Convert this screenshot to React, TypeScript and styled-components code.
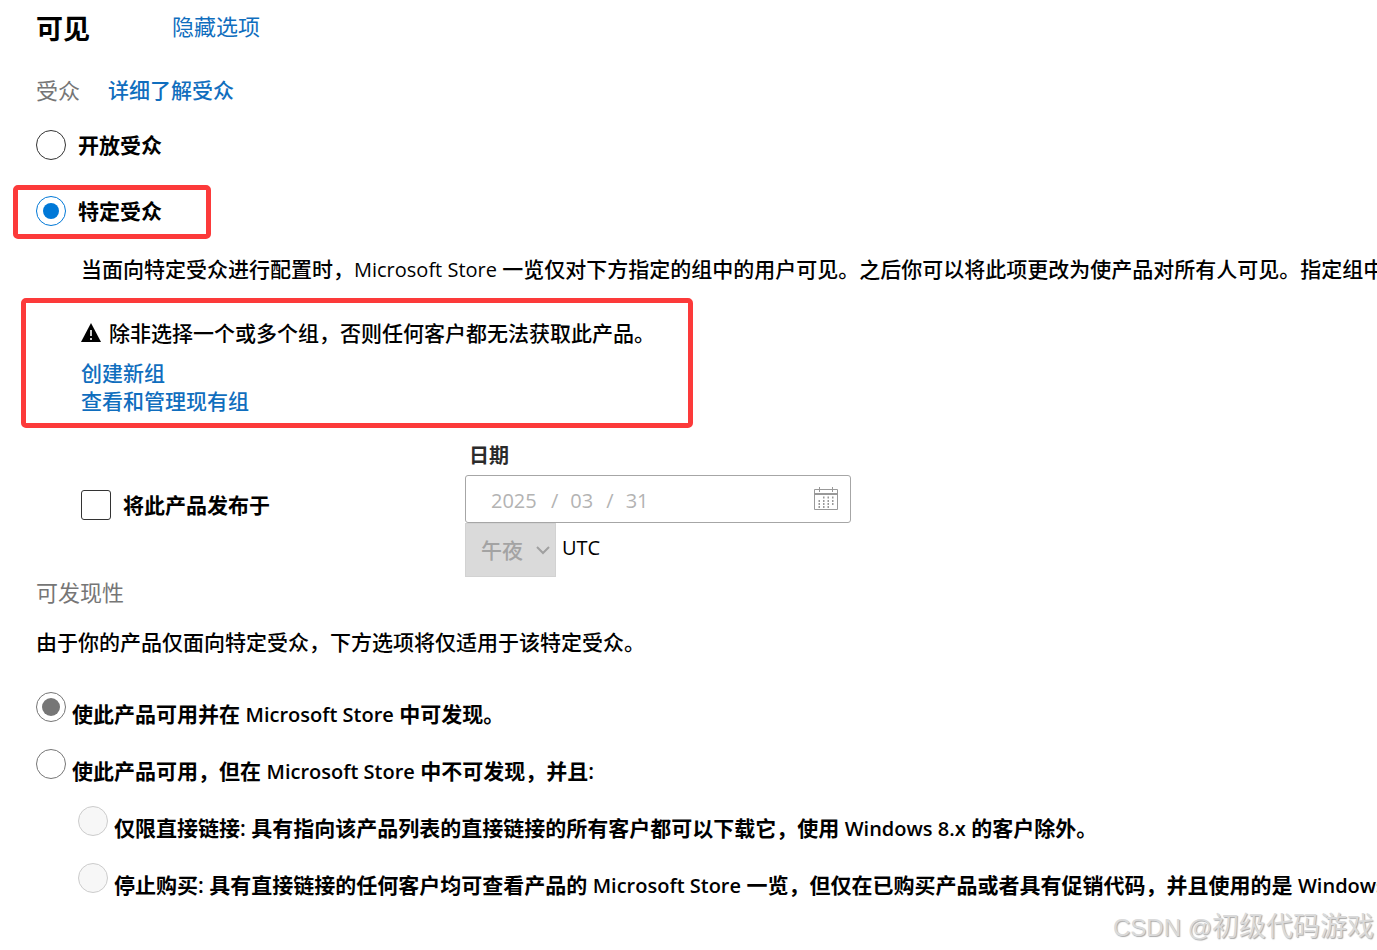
import React, { useState } from "react";
import styled, { createGlobalStyle } from "styled-components";

const GlobalStyle = createGlobalStyle`
  *, *::before, *::after { box-sizing: border-box; }
  body {
    margin: 0;
    background: #fff;
    color: #000;
    font-family: "Open Sans", "Noto Sans CJK SC", sans-serif;
    font-size: 21px;
    font-weight: 500;
    line-height: 28px;
  }
  h1, h2, p, fieldset { margin: 0; padding: 0; border: 0; min-width: 0; }
  input, select { font: inherit; margin: 0; }
`;

const Page = styled.main`
  overflow: hidden;
  white-space: nowrap;
`;

const Header = styled.header`
  display: flex;
  align-items: flex-start;
  gap: 82px;
  height: 56px;
  padding: 12px 0 0 36px;
`;

const Title = styled.h1`
  font-size: 27px;
  font-weight: 700;
  line-height: 34px;
`;

const Link = styled.a<{ $large?: boolean }>`
  color: #106ebe;
  font-size: ${(p) => (p.$large ? 22 : 21)}px;
  font-weight: ${(p) => (p.$large ? 400 : 500)};
  text-decoration: none;
`;

const SectionTitle = styled.h2`
  color: #767676;
  font-size: 22px;
  font-weight: 400;
`;

const AudienceHeading = styled.div`
  display: flex;
  align-items: center;
  gap: 28px;
  height: 68px;
  padding: 0 0 1px 36px;
`;

const Latin = styled.span<{ $strong?: boolean }>`
  font-size: 20px;
  font-weight: ${(p) => (p.$strong ? 600 : 400)};
  line-height: 20px;
`;

const Choice = styled.label<{ $inset?: boolean }>`
  display: flex;
  align-items: center;
  gap: 12px;
  padding: ${(p) => (p.$inset ? "0" : "6px 0 6px 36px")};
  font-weight: 600;
`;

const Radio = styled.input<{ $tone: string; $dot?: number }>`
  appearance: none;
  flex: none;
  display: grid;
  place-items: center;
  width: 30px;
  height: 30px;
  border: 1px solid ${(p) => p.$tone};
  border-radius: 50%;
  background: #fff;

  &:checked::before {
    content: "";
    width: ${(p) => p.$dot ?? 16}px;
    height: ${(p) => p.$dot ?? 16}px;
    border-radius: 50%;
    background: ${(p) => p.$tone};
  }
  &:disabled {
    border-color: #ccc;
    background: #f7f7f7;
  }
`;

const Highlight = styled.div`
  width: fit-content;
  border: 5px solid #fc3a3a;
  border-radius: 5px;
`;

const ChoiceHighlight = styled(Highlight)`
  margin: 19px 0 0 13px;
  padding: 6px 44px 8px 18px;
`;

const WarningHighlight = styled(Highlight)`
  margin: 15px 0 0 21px;
  padding: 16px 33px 8px 55px;
`;

const Explanation = styled.p`
  padding: 16px 0 0 81px;
`;

const Warning = styled.p`
  display: flex;
  align-items: center;
  gap: 8px;
  margin-bottom: 12px;
`;

const LinkList = styled.nav`
  display: flex;
  flex-direction: column;
  align-items: flex-start;
`;

const Schedule = styled.section`
  display: grid;
  grid-template-columns: 384px auto;
  justify-content: start;
  align-items: center;
  padding: 13px 0 0 81px;
`;

const PublishOption = styled.label`
  display: flex;
  align-items: center;
  gap: 12px;
  padding-bottom: 8px;
  font-weight: 600;
`;

const Checkbox = styled.input`
  appearance: none;
  width: 30px;
  height: 30px;
  border: 1px solid #333;
  border-radius: 3px;
  background: #fff;
`;

const DateLabel = styled.label`
  display: block;
  padding: 1px 0 5px 4px;
  color: #2b2b2b;
  font-weight: 600;
  font-size: 20px;
`;

const DateBox = styled.div`
  display: flex;
  align-items: center;
  gap: 12px;
  width: 386px;
  height: 48px;
  padding: 3px 12px 0 25px;
  border: 1px solid #a6a6a6;
  border-radius: 3px;
  color: #b3b3b3;
  font-size: 20px;
  font-weight: 400;
`;

const DatePart = styled.input<{ $digits: number }>`
  width: ${(p) => p.$digits * 12}px;
  padding: 0;
  border: 0;
  background: none;
  color: inherit;
`;

const CalendarIcon = styled.svg`
  flex: none;
  margin: 0 0 4px auto;
`;

const TimeRow = styled.div`
  display: flex;
  align-items: flex-start;
  gap: 6px;
`;

const TimeZone = styled(Latin)`
  padding-top: 15px;
`;

const SelectBox = styled.div`
  position: relative;
  width: 91px;
  height: 54px;
`;

const Select = styled.select`
  appearance: none;
  width: 100%;
  height: 100%;
  padding: 0 0 0 15px;
  border: 1px solid #d2d2d2;
  border-radius: 0;
  background: #dadada;
  color: #a3a3a3;
  opacity: 1;
`;

const Chevron = styled.svg`
  position: absolute;
  top: 23px;
  right: 6px;
  pointer-events: none;
`;

const Discoverability = styled.section`
  padding: 1px 0 0 36px;
`;

const Note = styled.p`
  margin: 22px 0 36px;
`;

const OptionList = styled.fieldset`
  display: flex;
  flex-direction: column;
  gap: 21px;
`;

const Option = styled.label<{ $nested?: boolean }>`
  display: flex;
  align-items: flex-start;
  gap: 6px;
  padding-left: ${(p) => (p.$nested ? 42 : 0)}px;
  font-weight: 600;
`;

const OptionText = styled.span`
  padding-top: 8px;
`;

const Watermark = styled.footer`
  padding: 10px 3px 4px 0;
  color: #dadada;
  font-family: "Liberation Sans", "Noto Sans CJK SC", sans-serif;
  font-size: 27px;
  font-weight: 400;
  line-height: 36px;
  text-align: right;
  text-shadow: 1px 1px 1px #aaa;
`;

const WatermarkSite = styled.span`
  font-size: 24px;
  line-height: 24px;
`;

export default function App() {
  const [audience, setAudience] = useState("private");
  const [discovery, setDiscovery] = useState("store");

  return (
    <Page>
      <GlobalStyle />
      <Header>
        <Title>可见</Title>
        <Link href="#options" $large>隐藏选项</Link>
      </Header>

      <section>
        <AudienceHeading>
          <SectionTitle>受众</SectionTitle>
          <Link href="#audience">详细了解受众</Link>
        </AudienceHeading>
        <Choice>
          <Radio
            type="radio"
            name="audience"
            $tone="#333"
            checked={audience === "public"}
            onChange={() => setAudience("public")}
          />
          开放受众
        </Choice>
        <ChoiceHighlight>
          <Choice $inset>
            <Radio
              type="radio"
              name="audience"
              $tone="#0078d7"
              checked={audience === "private"}
              onChange={() => setAudience("private")}
            />
            特定受众
          </Choice>
        </ChoiceHighlight>
        <Explanation>
          当面向特定受众进行配置时，<Latin>Microsoft Store </Latin>
          一览仅对下方指定的组中的用户可见。之后你可以将此项更改为使产品对所有人可见。指定组中
        </Explanation>
        <WarningHighlight>
          <Warning>
            <svg width="20" height="20" viewBox="0 0 20 20" aria-hidden="true">
              <path d="M10 0 20 19H0Z" fill="#000" />
              <path d="M9.2 7h1.6v6H9.200zM9.200 15h1.600v2H9.200z" fill="#fff" />
            </svg>
            除非选择一个或多个组，否则任何客户都无法获取此产品。
          </Warning>
          <LinkList>
            <Link href="#new-group">创建新组</Link>
            <Link href="#groups">查看和管理现有组</Link>
          </LinkList>
        </WarningHighlight>
      </section>

      <Schedule>
        <PublishOption>
          <Checkbox type="checkbox" />
          将此产品发布于
        </PublishOption>
        <div>
          <DateLabel htmlFor="year">日期</DateLabel>
          <DateBox>
            <DatePart id="year" $digits={4} defaultValue="2025" disabled />
            <span>/</span>
            <DatePart $digits={2} aria-label="月" defaultValue="03" disabled />
            <span>/</span>
            <DatePart $digits={2} aria-label="日" defaultValue="31" disabled />
            <CalendarIcon width="24" height="24" viewBox="0 0 24 24" aria-hidden="true">
              <path d="M.5 2.500h23v20H.5zM5.500 0v5M18.500 0v5" fill="none" stroke="#999" />
              <path d="M1 7h22" stroke="#999" strokeWidth="2" />
              <path
                d="M9 10.500h12M4.500 14h16.500M4.500 17h16.500M4.500 20h12"
                stroke="#999"
                strokeWidth="2"
                strokeDasharray="1.500 3"
              />
            </CalendarIcon>
          </DateBox>
          <TimeRow>
            <SelectBox>
              <Select aria-label="时间" disabled>
                <option>午夜</option>
              </Select>
              <Chevron width="14" height="9" viewBox="0 0 14 9" fill="none" stroke="#a0a0a0" strokeWidth="2" aria-hidden="true">
                <path d="m1 1 6 6 6-6" />
              </Chevron>
            </SelectBox>
            <TimeZone>UTC</TimeZone>
          </TimeRow>
        </div>
      </Schedule>

      <Discoverability>
        <SectionTitle>可发现性</SectionTitle>
        <Note>由于你的产品仅面向特定受众，下方选项将仅适用于该特定受众。</Note>
        <OptionList>
          <Option>
            <Radio
              type="radio"
              name="discovery"
              $tone="#767676"
              $dot={18}
              checked={discovery === "store"}
              onChange={() => setDiscovery("store")}
            />
            <OptionText>
              使此产品可用并在 <Latin $strong>Microsoft Store</Latin> 中可发现。
            </OptionText>
          </Option>
          <Option>
            <Radio
              type="radio"
              name="discovery"
              $tone="#767676"
              $dot={18}
              checked={discovery === "hidden"}
              onChange={() => setDiscovery("hidden")}
            />
            <OptionText>
              使此产品可用，但在 <Latin $strong>Microsoft Store</Latin> 中不可发现，并且:
            </OptionText>
          </Option>
          <Option $nested>
            <Radio type="radio" name="hidden-mode" $tone="#ccc" disabled />
            <OptionText>
              仅限直接链接: 具有指向该产品列表的直接链接的所有客户都可以下载它，使用 <Latin $strong>Windows 8.x</Latin> 的客户除外。
            </OptionText>
          </Option>
          <Option $nested>
            <Radio type="radio" name="hidden-mode" $tone="#ccc" disabled />
            <OptionText>
              停止购买: 具有直接链接的任何客户均可查看产品的 <Latin $strong>Microsoft Store</Latin> 一览，但仅在已购买产品或者具有促销代码，并且使用的是 <Latin $strong>Windows</Latin>
            </OptionText>
          </Option>
        </OptionList>
      </Discoverability>

      <Watermark>
        <WatermarkSite>CSDN @</WatermarkSite>初级代码游戏
      </Watermark>
    </Page>
  );
}
